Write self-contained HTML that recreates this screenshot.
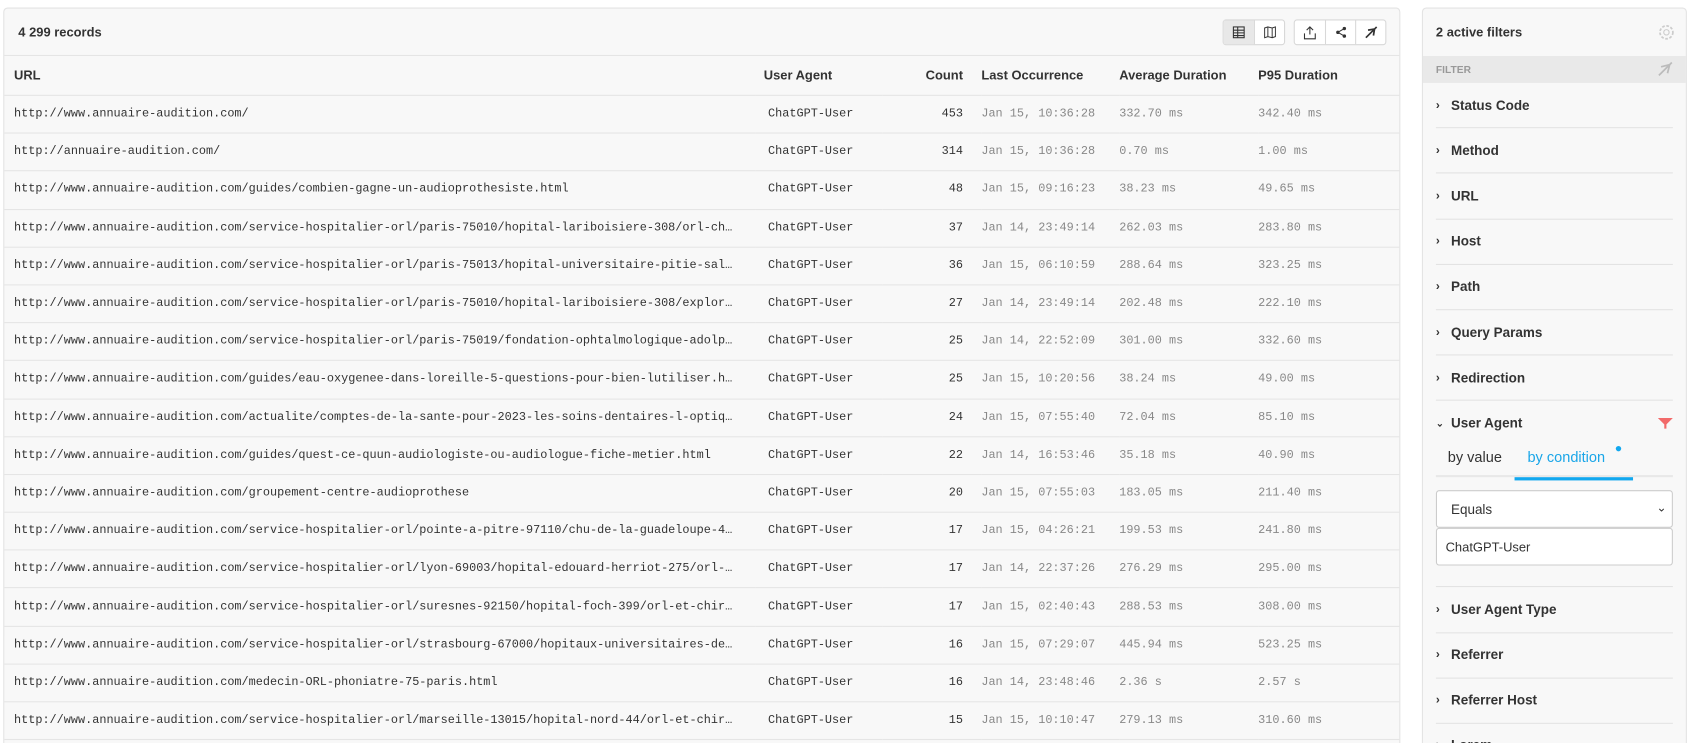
<!DOCTYPE html>
<html style="overflow:hidden;height:743px"><head><meta charset="utf-8"><style>
*{box-sizing:border-box;margin:0;padding:0}
body{width:1689px;height:743px;background:#fff;font-family:"Liberation Sans",sans-serif;color:#333;overflow:hidden;position:relative}
#w{position:absolute;left:0;top:0;width:1568px;height:690px;overflow:hidden;transform:scale(1.0772);transform-origin:0 0}
.panel{position:absolute;left:3px;top:7px;width:1297px;height:760px;background:#f8f8f8;border:1px solid #e3e3e3;border-radius:4px}
.hdr{height:44px;border-bottom:1px solid #e5e5e5;position:relative}
.hdr .t{position:absolute;left:13px;top:15px;font-size:12px;font-weight:bold}
.grp{position:absolute;top:10px;height:24px;border:1px solid #d8d8d8;border-radius:3px;background:#fff;display:flex}
.grp div{width:28px;height:22px;border-left:1px solid #d8d8d8;display:flex;align-items:center;justify-content:center}
.grp div:first-child{border-left:none}
table{border-collapse:collapse;width:100%;table-layout:fixed}
td,th{height:35.2px;border-bottom:1px solid #e5e5e5;white-space:nowrap;overflow:hidden;font-size:11px;vertical-align:middle}
th{font-size:12px;font-weight:bold;text-align:left;height:36px}
td{font-family:"Liberation Mono",monospace;color:#333}
td.g{color:#888}
.r{text-align:right}
.side{position:absolute;left:1320px;top:7px;width:246px;height:760px;background:#f8f8f8;border:1px solid #e3e3e3;border-radius:4px}
.side .h{height:44px;position:relative}
.side .h span{position:absolute;left:12px;top:15px;font-size:12px;font-weight:bold}
.fb{height:25px;background:#e9e9e9;font-size:9.5px;font-weight:bold;color:#999;padding:8px 12px;position:relative}
.it{margin:0 12px;height:42.2px;border-bottom:1px solid #e3e3e3;font-size:12.5px;font-weight:bold;display:flex;align-items:center;position:relative}
.it i{font-style:normal;width:14px;font-size:11px}
</style></head><body><div id="w">
<div class="panel">
<div class="hdr"><span class="t">4 299 records</span>
<div class="grp" style="left:1131px;background:#fff"><div style="background:#e8e8e8"><svg width="12" height="12"><rect x="1" y="1" width="10" height="10" fill="none" stroke="#333"/><path d="M1 4H11M1 6.5H11M1 9H11M5 1V11" stroke="#333"/></svg></div><div><svg width="12" height="12"><path d="M1 2L4 1 8 2 11 1V10L8 11 4 10 1 11Z M4 1V10 M8 2V11" fill="none" stroke="#333" stroke-width=".9"/></svg></div></div>
<div class="grp" style="left:1197px"><div><svg width="12" height="13"><path d="M6 1V8M3 4L6 1 9 4M1 7V12H11V7" fill="none" stroke="#333"/></svg></div><div><svg width="12" height="12"><circle cx="3" cy="6" r="1.6" fill="#333"/><circle cx="9" cy="2.5" r="1.6" fill="#333"/><circle cx="9" cy="9.5" r="1.6" fill="#333"/><path d="M3 6L9 2.5M3 6L9 9.5" stroke="#333"/></svg></div><div><svg width="12" height="12"><path d="M1 11L11 1M3 4L9 3 8 9" fill="none" stroke="#333" stroke-width="1.6"/></svg></div></div>
</div>
<table>
<colgroup><col style="width:697px"><col style="width:118px"><col style="width:75px"><col style="width:17px"><col style="width:128px"><col style="width:129px"><col></colgroup>
<tr><th style="padding-left:9px">URL</th><th style="padding-left:8px">User Agent</th><th class="r">Count</th><th></th><th>Last Occurrence</th><th>Average Duration</th><th>P95 Duration</th></tr>
</table>
<table id="t">
<colgroup><col style="width:697px"><col style="width:118px"><col style="width:75px"><col style="width:17px"><col style="width:128px"><col style="width:129px"><col></colgroup>
<tr><td style="padding-left:9px">http://www.annuaire-audition.com/</td><td style="padding-left:12px">ChatGPT-User</td><td class="r">453</td><td></td><td class="g">Jan 15, 10:36:28</td><td class="g">332.70 ms</td><td class="g">342.40 ms</td></tr>
<tr><td style="padding-left:9px">http://annuaire-audition.com/</td><td style="padding-left:12px">ChatGPT-User</td><td class="r">314</td><td></td><td class="g">Jan 15, 10:36:28</td><td class="g">0.70 ms</td><td class="g">1.00 ms</td></tr>
<tr><td style="padding-left:9px">http://www.annuaire-audition.com/guides/combien-gagne-un-audioprothesiste.html</td><td style="padding-left:12px">ChatGPT-User</td><td class="r">48</td><td></td><td class="g">Jan 15, 09:16:23</td><td class="g">38.23 ms</td><td class="g">49.65 ms</td></tr>
<tr><td style="padding-left:9px">http://www.annuaire-audition.com/service-hospitalier-orl/paris-75010/hopital-lariboisiere-308/orl-ch…</td><td style="padding-left:12px">ChatGPT-User</td><td class="r">37</td><td></td><td class="g">Jan 14, 23:49:14</td><td class="g">262.03 ms</td><td class="g">283.80 ms</td></tr>
<tr><td style="padding-left:9px">http://www.annuaire-audition.com/service-hospitalier-orl/paris-75013/hopital-universitaire-pitie-sal…</td><td style="padding-left:12px">ChatGPT-User</td><td class="r">36</td><td></td><td class="g">Jan 15, 06:10:59</td><td class="g">288.64 ms</td><td class="g">323.25 ms</td></tr>
<tr><td style="padding-left:9px">http://www.annuaire-audition.com/service-hospitalier-orl/paris-75010/hopital-lariboisiere-308/explor…</td><td style="padding-left:12px">ChatGPT-User</td><td class="r">27</td><td></td><td class="g">Jan 14, 23:49:14</td><td class="g">202.48 ms</td><td class="g">222.10 ms</td></tr>
<tr><td style="padding-left:9px">http://www.annuaire-audition.com/service-hospitalier-orl/paris-75019/fondation-ophtalmologique-adolp…</td><td style="padding-left:12px">ChatGPT-User</td><td class="r">25</td><td></td><td class="g">Jan 14, 22:52:09</td><td class="g">301.00 ms</td><td class="g">332.60 ms</td></tr>
<tr><td style="padding-left:9px">http://www.annuaire-audition.com/guides/eau-oxygenee-dans-loreille-5-questions-pour-bien-lutiliser.h…</td><td style="padding-left:12px">ChatGPT-User</td><td class="r">25</td><td></td><td class="g">Jan 15, 10:20:56</td><td class="g">38.24 ms</td><td class="g">49.00 ms</td></tr>
<tr><td style="padding-left:9px">http://www.annuaire-audition.com/actualite/comptes-de-la-sante-pour-2023-les-soins-dentaires-l-optiq…</td><td style="padding-left:12px">ChatGPT-User</td><td class="r">24</td><td></td><td class="g">Jan 15, 07:55:40</td><td class="g">72.04 ms</td><td class="g">85.10 ms</td></tr>
<tr><td style="padding-left:9px">http://www.annuaire-audition.com/guides/quest-ce-quun-audiologiste-ou-audiologue-fiche-metier.html</td><td style="padding-left:12px">ChatGPT-User</td><td class="r">22</td><td></td><td class="g">Jan 14, 16:53:46</td><td class="g">35.18 ms</td><td class="g">40.90 ms</td></tr>
<tr><td style="padding-left:9px">http://www.annuaire-audition.com/groupement-centre-audioprothese</td><td style="padding-left:12px">ChatGPT-User</td><td class="r">20</td><td></td><td class="g">Jan 15, 07:55:03</td><td class="g">183.05 ms</td><td class="g">211.40 ms</td></tr>
<tr><td style="padding-left:9px">http://www.annuaire-audition.com/service-hospitalier-orl/pointe-a-pitre-97110/chu-de-la-guadeloupe-4…</td><td style="padding-left:12px">ChatGPT-User</td><td class="r">17</td><td></td><td class="g">Jan 15, 04:26:21</td><td class="g">199.53 ms</td><td class="g">241.80 ms</td></tr>
<tr><td style="padding-left:9px">http://www.annuaire-audition.com/service-hospitalier-orl/lyon-69003/hopital-edouard-herriot-275/orl-…</td><td style="padding-left:12px">ChatGPT-User</td><td class="r">17</td><td></td><td class="g">Jan 14, 22:37:26</td><td class="g">276.29 ms</td><td class="g">295.00 ms</td></tr>
<tr><td style="padding-left:9px">http://www.annuaire-audition.com/service-hospitalier-orl/suresnes-92150/hopital-foch-399/orl-et-chir…</td><td style="padding-left:12px">ChatGPT-User</td><td class="r">17</td><td></td><td class="g">Jan 15, 02:40:43</td><td class="g">288.53 ms</td><td class="g">308.00 ms</td></tr>
<tr><td style="padding-left:9px">http://www.annuaire-audition.com/service-hospitalier-orl/strasbourg-67000/hopitaux-universitaires-de…</td><td style="padding-left:12px">ChatGPT-User</td><td class="r">16</td><td></td><td class="g">Jan 15, 07:29:07</td><td class="g">445.94 ms</td><td class="g">523.25 ms</td></tr>
<tr><td style="padding-left:9px">http://www.annuaire-audition.com/medecin-ORL-phoniatre-75-paris.html</td><td style="padding-left:12px">ChatGPT-User</td><td class="r">16</td><td></td><td class="g">Jan 14, 23:48:46</td><td class="g">2.36 s</td><td class="g">2.57 s</td></tr>
<tr><td style="padding-left:9px">http://www.annuaire-audition.com/service-hospitalier-orl/marseille-13015/hopital-nord-44/orl-et-chir…</td><td style="padding-left:12px">ChatGPT-User</td><td class="r">15</td><td></td><td class="g">Jan 15, 10:10:47</td><td class="g">279.13 ms</td><td class="g">310.60 ms</td></tr>
<tr><td style="padding-left:9px">&nbsp;</td><td></td><td></td><td></td><td></td><td></td><td></td></tr>
</table>
</div>
<div class="side">
<div class="h"><span>2 active filters</span><svg style="position:absolute;right:10px;top:14px" width="16" height="16" viewBox="0 0 16 16"><circle cx="8" cy="8" r="2.5" fill="none" stroke="#ccc"/><circle cx="8" cy="8" r="6" fill="none" stroke="#ccc" stroke-dasharray="2.5 1.5" stroke-width="1.6"/></svg></div>
<div class="fb">FILTER<svg style="position:absolute;right:12px;top:5px" width="14" height="14"><path d="M1 13L13 1M3 5L11 3 9 11" fill="none" stroke="#bbb" stroke-width="1.6"/></svg></div>
<div class="it"><i>›</i>Status Code</div>
<div class="it"><i>›</i>Method</div>
<div class="it"><i>›</i>URL</div>
<div class="it"><i>›</i>Host</div>
<div class="it"><i>›</i>Path</div>
<div class="it"><i>›</i>Query Params</div>
<div class="it"><i>›</i>Redirection</div>
<div style="margin:0 12px;border-bottom:1px solid #e3e3e3;height:173px;position:relative">
<div style="height:42px;display:flex;align-items:center;font-size:12.5px;font-weight:bold"><i style="font-style:normal;width:14px;font-size:9px">⌄</i>User Agent<svg style="position:absolute;right:0;top:16px" width="14" height="10"><path d="M0 0H14L8 6V10H6V6Z" fill="#f26a6a"/></svg></div>
<div style="height:29px;border-bottom:2px solid #e8e8e8;position:relative;font-size:13.5px">
<span style="position:absolute;left:11px;top:3px">by value</span>
<span style="position:absolute;left:73px;top:3px;color:#1aa6e8;width:110px;height:29px;border-bottom:3px solid #12a8ef;padding-left:12px">by condition</span>
<span style="position:absolute;left:167px;top:0;width:5px;height:5px;border-radius:50%;background:#12a8ef"></span></div>
<div style="margin-top:12px;height:35px;border:1px solid #ccc;border-radius:3px;background:#fff;font-size:12.5px;padding:10px 13px;position:relative">Equals<span style="position:absolute;right:5px;top:9px;font-size:11px">⌄</span></div>
<div style="height:35px;border:1px solid #ccc;border-radius:3px;background:#fff;font-size:12px;padding:10px 8px">ChatGPT-User</div>
</div>
<div class="it"><i>›</i>User Agent Type</div>
<div class="it"><i>›</i>Referrer</div>
<div class="it"><i>›</i>Referrer Host</div>
<div class="it"><i>›</i>Lorem</div>
</div>
</div></body></html>
